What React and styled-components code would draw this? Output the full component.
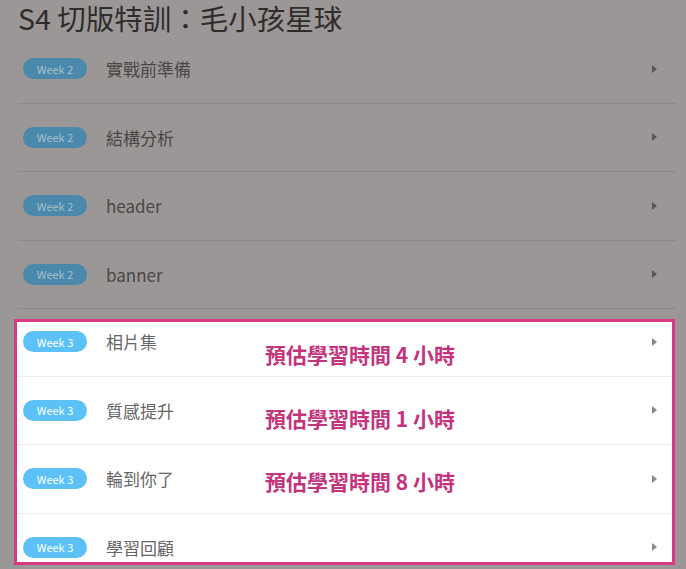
import React from 'react';
import styled, { createGlobalStyle, ThemeProvider } from 'styled-components';

const dimTheme = {
    text: '#4b4646',
    divider: '#8e8989',
    arrow: '#5b5656',
    badgeBg: '#4a89ab',
    badgeText: '#a9bfca',
    padLeft: '5px',
    padRight: '19px',
};

const liveTheme = {
    text: '#666666',
    divider: '#ededed',
    arrow: '#8c888c',
    badgeBg: '#5cc1f6',
    badgeText: '#ffffff',
    padLeft: '6px',
    padRight: '15px',
};

const lessons = [
    {week: 2, title: '實戰前準備'},
    {week: 2, title: '結構分析'},
    {week: 2, title: 'header'},
    {week: 2, title: 'banner'},
];

const focus = [
    {week: 3, title: '相片集'},
    {week: 3, title: '質感提升'},
    {week: 3, title: '輪到你了'},
    {week: 3, title: '學習回顧'},
];

const hours = [4, 1, 8];

const Arrow = () => (
    <svg width="5" height="8" viewBox="0 0 5 8">
        <polygon points="0,0 5,4 0,8" fill="currentColor" />
    </svg>
);

const LessonRow = ({week, title}) => (
    <Row>
        <Badge>Week {week}</Badge>
        <Name>{title}</Name>
        <Chevron><Arrow /></Chevron>
    </Row>
);

const App = () => {
  return (
    <>
        <GlobalStyle />
        <Page>
            <Title>S4 切版特訓：毛小孩星球</Title>
            <ThemeProvider theme={dimTheme}>
                <List>
                    {lessons.map((l, i) => <LessonRow key={i} {...l} />)}
                </List>
            </ThemeProvider>
            <ThemeProvider theme={liveTheme}>
                <Focus>
                    <List>
                        {focus.map((l, i) => <LessonRow key={i} {...l} />)}
                    </List>
                    <Notes>
                        {hours.map(h => <Note key={h}>預估學習時間 {h} 小時</Note>)}
                    </Notes>
                </Focus>
            </ThemeProvider>
        </Page>
    </>
  )
}

export default App;

const GlobalStyle = createGlobalStyle`
    * { box-sizing: border-box; }
    html, body {
        margin: 0;
        padding: 0;
        background: #9c9797;
        font-family: "Noto Sans CJK TC", "Noto Sans", sans-serif;
    }
`

const Page = styled.div`
    width: 686px;
    height: 569px;
    overflow: hidden;
    padding-left: 18px;
`

const Title = styled.h1`
    margin: 0;
    padding: 1px 0 0 0;
    height: 35px;
    font-size: 28.5px;
    line-height: 34px;
    font-weight: 400;
    color: #2f2c2c;
`

const List = styled.ul`
    list-style: none;
    margin: 0;
    padding: 0;
    width: 658px;
`

const Row = styled.li`
    height: 68.5px;
    display: flex;
    align-items: center;
    padding: 0 ${({theme}) => theme.padRight} 0 ${({theme}) => theme.padLeft};
    border-bottom: 1px solid ${({theme}) => theme.divider};
`

const Badge = styled.span`
    width: 64px;
    height: 21px;
    border-radius: 11px;
    display: flex;
    align-items: center;
    justify-content: center;
    background: ${({theme}) => theme.badgeBg};
    color: ${({theme}) => theme.badgeText};
    font-size: 11px;
    font-weight: 400;
`

const Name = styled.span`
    margin-left: 19px;
    font-size: 17px;
    color: ${({theme}) => theme.text};
    flex: 1;
`

const Chevron = styled.span`
    display: flex;
    color: ${({theme}) => theme.arrow};
`

const Focus = styled.section`
    position: relative;
    margin: 10px 0 0 -4px;
    width: 661px;
    height: 246px;
    overflow: hidden;
    background: #ffffff;
    border: 3px solid #d63a84;

    > ul {
        width: 100%;
        margin-top: -14px;
    }
`

const Notes = styled.div`
    position: absolute;
    left: 248px;
    top: 22px;
    display: flex;
    flex-direction: column;
    gap: 42.5px;
`

const Note = styled.div`
    font-size: 21px;
    line-height: 21px;
    font-weight: 700;
    color: #c4347c;
    white-space: nowrap;
`
